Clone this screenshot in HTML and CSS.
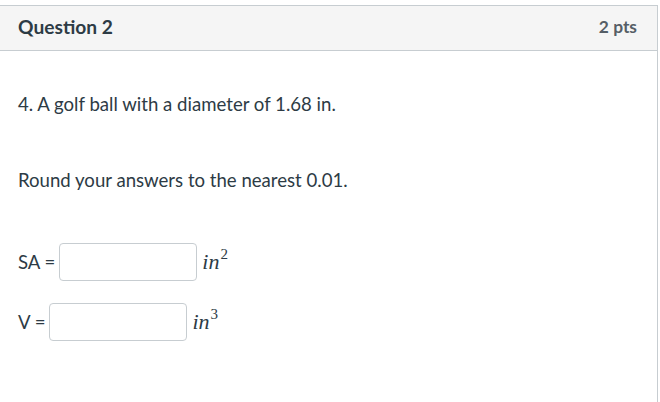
FILE: index.html
```html
<!DOCTYPE html>
<html>
<head>
<meta charset="utf-8">
<link rel="stylesheet" href="styles.css">
</head>
<body>
<div class="card">
  <div class="card-header">
    <span class="title">Question 2</span>
    <span class="pts">2 pts</span>
  </div>
  <div class="card-body">
    <p class="q">4. A golf ball with a diameter of 1.68 in.</p>
    <p class="round">Round your answers to the nearest 0.01.</p>
    <div class="row row-sa">
      <span class="label">SA =</span>
      <input class="answer" type="text">
      <span class="unit"><i>in</i><sup>2</sup></span>
    </div>
    <div class="row row-v">
      <span class="label">V =</span>
      <input class="answer" type="text">
      <span class="unit"><i>in</i><sup>3</sup></span>
    </div>
  </div>
</div>
</body>
</html>
```

FILE: styles.css
```css
html, body {
  margin: 0;
  padding: 0;
  background: #ffffff;
}
body {
  font-family: Lato, "Liberation Sans", sans-serif;
  color: #2d3b45;
  overflow: hidden;
  height: 402px;
}
.card {
  margin-top: 5px;
  margin-left: -1px;
  width: 659px;
  height: 397px;
  box-sizing: border-box;
  border: 1px solid #c7cdd1;
  border-bottom: none;
}
.card-header {
  height: 45px;
  box-sizing: border-box;
  background: #f5f5f5;
  border-bottom: 1px solid #c7cdd1;
  display: flex;
  align-items: center;
  justify-content: space-between;
  padding: 0 20px 4px 18px;
}
.title {
  font-weight: 700;
  font-size: 19.2px;
  color: #2d3b45;
}
.pts {
  font-weight: 700;
  font-size: 17.4px;
  color: #555e66;
}
.card-body {
  padding: 0 18px;
}
.q {
  margin: 0;
  padding-top: 41px;
  font-size: 18.6px;
  line-height: 24px;
}
.round {
  margin: 52px 0 0;
  font-size: 18.6px;
  line-height: 24px;
}
.row {
  display: flex;
  align-items: center;
  font-size: 18.6px;
}
.row-sa {
  margin-top: 51px;
}
.row-v {
  margin-top: 22px;
}
.label {
  margin-right: 4px;
}
.answer {
  width: 138px;
  height: 38px;
  box-sizing: border-box;
  border: 1px solid #c7cdd1;
  border-radius: 4px;
  background: #fff;
  padding: 0;
  margin: 0;
}
.unit {
  margin-left: 5px;
  font-family: "Liberation Serif", serif;
  font-size: 22px;
  color: #2d3b45;
}
.unit i {
  font-style: italic;
}
.unit sup {
  font-size: 15px;
  font-style: normal;
  vertical-align: 10px;
  line-height: 0;
  margin-left: 1px;
}
```
